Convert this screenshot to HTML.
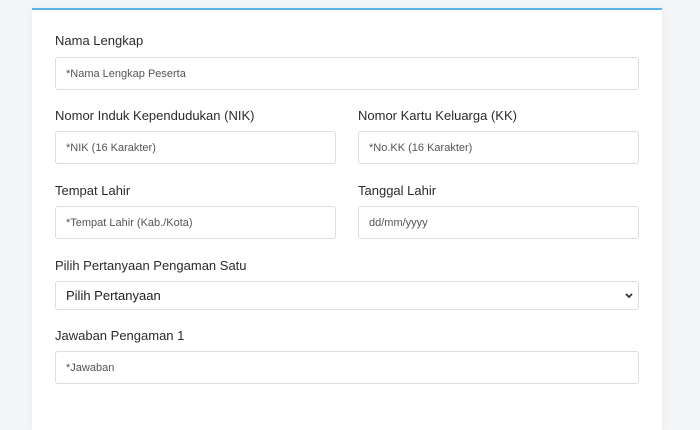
<!DOCTYPE html>
<html><head><style>
body{margin:0;width:700px;height:406px;overflow:hidden;background:#f4f5f7;font-family:"Liberation Sans",sans-serif;}
.card{position:absolute;left:32px;top:8px;width:630px;height:420px;background:#fff;border-top:2px solid #5ab4e8;box-shadow:0 0 8px rgba(0,0,0,0.05);}
.l{position:absolute;font-size:13px;color:#2b2b2b;}
.i{position:absolute;box-sizing:border-box;border:1px solid #dcdde3;border-radius:3px;background:#fff;font-size:11px;color:#555;padding-left:10px;display:flex;align-items:center;}
</style></head><body>
<div class="card"></div>
<div class="l" style="left:55px;top:33px">Nama Lengkap</div>
<div class="i" style="left:55px;top:57px;width:584px;height:33px">*Nama Lengkap Peserta</div>
<div class="l" style="left:55px;top:108px">Nomor Induk Kependudukan (NIK)</div>
<div class="l" style="left:358px;top:108px">Nomor Kartu Keluarga (KK)</div>
<div class="i" style="left:55px;top:131px;width:281px;height:33px">*NIK (16 Karakter)</div>
<div class="i" style="left:358px;top:131px;width:281px;height:33px">*No.KK (16 Karakter)</div>
<div class="l" style="left:55px;top:183px">Tempat Lahir</div>
<div class="l" style="left:358px;top:183px">Tanggal Lahir</div>
<div class="i" style="left:55px;top:206px;width:281px;height:33px">*Tempat Lahir (Kab./Kota)</div>
<div class="i" style="left:358px;top:206px;width:281px;height:33px">dd/mm/yyyy</div>
<div class="l" style="left:55px;top:258px">Pilih Pertanyaan Pengaman Satu</div>
<div class="i" style="left:55px;top:281px;width:584px;height:29px;font-size:13px;color:#222;">Pilih Pertanyaan
<svg style="position:absolute;right:5px;top:11px" width="8" height="6" viewBox="0 0 8 6"><path d="M1 1l3 3 3-3" stroke="#333" stroke-width="1.8" fill="none"/></svg></div>
<div class="l" style="left:55px;top:328px">Jawaban Pengaman 1</div>
<div class="i" style="left:55px;top:351px;width:584px;height:33px">*Jawaban</div>
</body></html>
